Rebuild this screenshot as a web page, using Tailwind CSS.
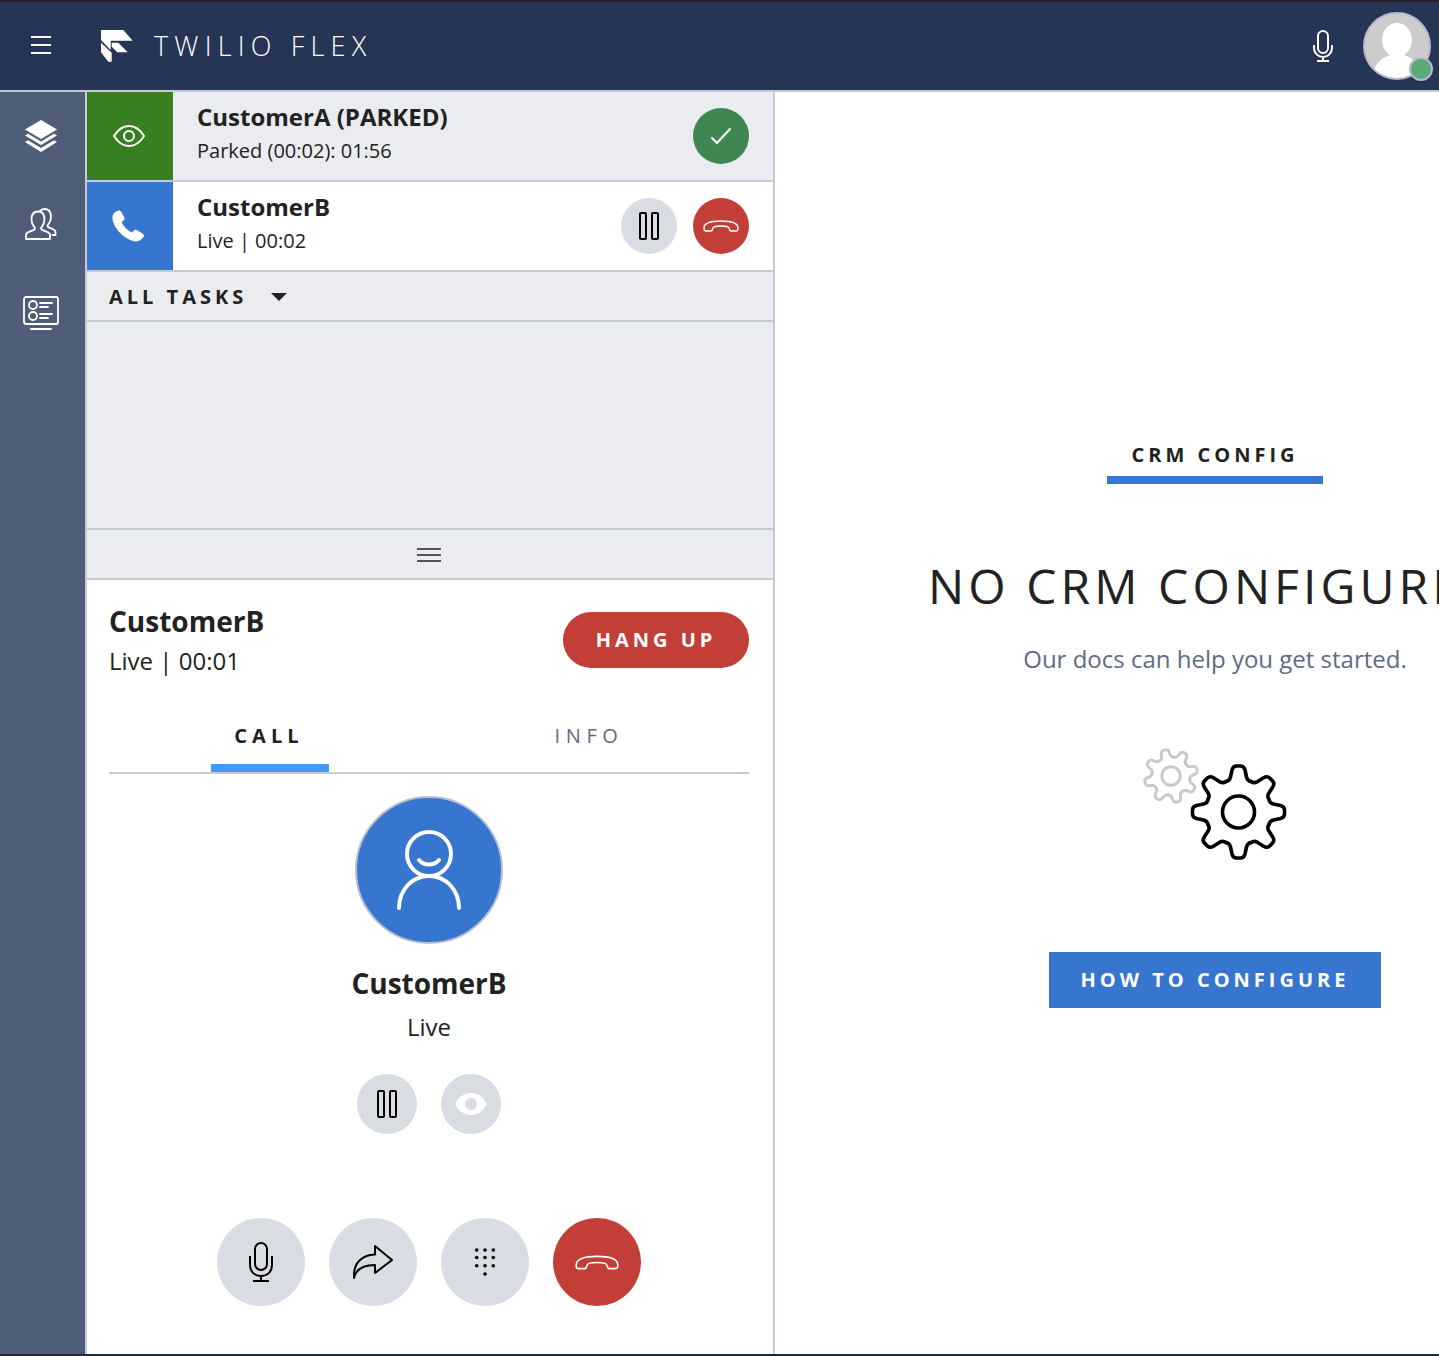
<!DOCTYPE html>
<html lang="en">
<head>
<meta charset="utf-8">
<title>Twilio Flex</title>
<script src="https://cdn.jsdelivr.net/npm/@tailwindcss/browser@4"></script>
</head>
<body class="m-0 bg-white">
<div class="flex h-[1356px] w-[1439px] flex-col overflow-hidden font-['Open_Sans',sans-serif] text-[#222222]">
  <div class="h-[2px] shrink-0 bg-[#222428]"></div>
  <header class="flex h-[88px] shrink-0 items-center bg-[#263556] text-white">
    <svg class="mb-[2px] ml-[31px]" width="20" height="18" viewBox="0 0 20 18"><path d="M0 1h20M0 9h20M0 17h20" stroke="#fff" stroke-width="2"/></svg>
    <svg class="ml-[50px]" width="32" height="32" viewBox="101 30 32 32" fill="#fff"><polygon points="101,30 123.3,30 132.7,40.7 110.7,40.7 110.7,50 101,40"/><polygon points="111.7,42.7 118.3,42.7 127.7,52.3 117.3,52.3 111.7,46.7"/><polygon points="101,42.7 111.7,52.7 111.7,61.7 108.3,61.7 101,52.3"/></svg>
    <span class="mb-[2px] ml-[21px] text-[27px] leading-none font-light tracking-[6.2px] whitespace-nowrap">TWILIO FLEX</span>
    <svg class="ml-auto" width="20" height="32" viewBox="0 0 20 32" fill="none" stroke="#fff" stroke-width="2"><rect x="5" y="1" width="10" height="22" rx="5"/><path d="M1 15v3a9 9 0 0 0 18 0v-3M10 27v4M4 31h12"/></svg>
    <div class="relative mr-[8px] ml-[30px] h-[68px] w-[68px] overflow-visible">
      <div class="h-full w-full overflow-hidden rounded-full border-2 border-[#b5b9c9] bg-[#cccccc]">
        <svg width="64" height="64" viewBox="0 0 64 64" fill="#fff"><ellipse cx="32" cy="26" rx="15" ry="17"/><path d="M8 60c2-12 12-20 24-20s22 8 24 20l-8 8H16z"/></svg>
      </div>
      <span class="absolute right-[-2px] bottom-[-1px] h-[24px] w-[24px] rounded-full border-2 border-[#b5b9c9] bg-[#5aa976]"></span>
    </div>
  </header>
  <div class="flex min-h-0 flex-1 border-t-2 border-[#c6cad7]">
    <nav class="flex w-[87px] shrink-0 flex-col items-center border-r-2 border-[#c6cad7] bg-[#4f5d78] pt-[28px] pr-[3px]">
      <svg class="block" width="32" height="32" viewBox="0 0 32 32" fill="#fff"><polygon points="16,0 32,9.5 16,19 0,9.5"/><path d="M0 15.5l3-1.800 13 7.800 13-7.800 3 1.800-16 9.500z"/><path d="M0 22l3-1.800 13 7.800 13-7.800 3 1.800-16 10z"/></svg>
      <svg class="mt-[56px] block" width="32" height="32" viewBox="0 0 32 32" fill="none" stroke="#fff" stroke-width="1.800" stroke-linejoin="round" stroke-linecap="round"><path d="M1 31v-4c0-1.500 1-2.500 3-3.200l5-2c1-.5 1.200-1.500.5-2.500C7.500 17 6.500 14.500 6.500 11.500 6.500 6.500 9 3.500 13 3.500s6.500 3 6.500 8c0 3-1 5.500-3 7.800-.7 1-.5 2 .5 2.500l5 2c2 .7 3 1.700 3 3.200v4z"/><path d="M15 3c1.500-1.500 3-2 4.500-2 4 0 6.500 3 6.500 8 0 3-1 5.500-3 7.800-.7 1-.5 2 .5 2.500l4 1.700c2 .8 3 1.700 3 3.200v2.800h-3"/></svg>
      <svg class="mt-[56px] block" width="36" height="34" viewBox="0 0 36 34" fill="none" stroke="#fff" stroke-width="1.800" stroke-linecap="round"><rect x="1" y="1" width="34" height="27" rx="2"/><circle cx="10" cy="9" r="4"/><circle cx="10" cy="20" r="4"/><path d="M17 7h12M17 11h8M17 18h12M17 22h8M8 33h20"/></svg>
    </nav>
    <main class="flex w-[688px] shrink-0 flex-col border-r-2 border-[#c6cad7]">
      <section class="flex h-[90px] shrink-0 border-b-2 border-[#c6cad7] bg-[#ebecf0]">
        <div class="flex w-[86px] shrink-0 items-center justify-center bg-[#387f22] pr-[2px]">
          <svg width="32" height="22" viewBox="0 0 32 22" fill="none" stroke="#fff" stroke-width="2"><path d="M1 11C5 4.500 10 1 16 1s11 3.500 15 10c-4 6.500-9 10-15 10S5 17.500 1 11z"/><circle cx="16" cy="11" r="5"/></svg>
        </div>
        <div class="ml-[24px] flex flex-col">
          <div class="mt-[9px] h-[32px] text-[24px] leading-[32px] font-bold whitespace-nowrap">CustomerA (PARKED)</div>
          <div class="mt-[3px] text-[20px] leading-[30px] whitespace-nowrap">Parked (00:02): 01:56</div>
        </div>
        <div class="mt-[16px] mr-[24px] ml-auto flex h-[56px] w-[56px] items-center justify-center rounded-full bg-[#3f8653]">
          <svg width="22" height="18" viewBox="0 0 22 18" fill="none" stroke="#fff" stroke-width="2" stroke-linecap="round"><path d="M2 11l5 5L20 2"/></svg>
        </div>
      </section>
      <section class="flex h-[90px] shrink-0 border-b-2 border-[#c6cad7] bg-white">
        <div class="flex w-[86px] shrink-0 items-center justify-center bg-[#3776ce] pr-[4px]">
          <svg width="32" height="32" viewBox="0 0 32 32" fill="#fff"><path d="M5 1C7 0 8.500 .5 9.500 2L12 7c1 1.500.5 3-1 4l-1.500 1c2 4.500 6 8.500 10.500 10.500l1.500-1.500c1-1.500 2.500-1.500 4-.5l5 3c1.500 1 2 2.500.5 4L28.500 30c-2.500 2-6.500 2-11.500-.5C9 25.500 3 18 1 11.500 0 7.500 .5 4.500 2.500 2.500z"/></svg>
        </div>
        <div class="ml-[24px] flex flex-col">
          <div class="mt-[9px] h-[32px] text-[24px] leading-[32px] font-bold whitespace-nowrap">CustomerB</div>
          <div class="mt-[3px] text-[20px] leading-[30px] whitespace-nowrap">Live | 00:02</div>
        </div>
        <div class="mt-[16px] mr-[24px] ml-auto flex gap-[16px]">
          <div class="flex h-[56px] w-[56px] items-center justify-center rounded-full bg-[#d9dce3]">
            <svg width="20" height="28" viewBox="0 0 20 28" fill="none" stroke="#000" stroke-width="2"><rect x="1" y="1" width="6" height="26" rx="1"/><rect x="13" y="1" width="6" height="26" rx="1"/></svg>
          </div>
          <div class="flex h-[56px] w-[56px] items-center justify-center rounded-full bg-[#c43e38]">
            <svg width="36" height="12" viewBox="0 0 36 12" fill="none" stroke="#fff" stroke-width="1.400"><path d="M1 8C1 3 8 1 18 1s17 2 17 7c0 2 0 3-2 3h-5c-1 0-1.500-1-2-3-.5-1.500-4-2-8-2s-7.500.5-8 2c-.5 2-1 3-2 3H3C1 11 1 10 1 8z"/></svg>
          </div>
        </div>
      </section>
      <section class="flex h-[50px] shrink-0 items-center border-b-2 border-[#c6cad7] bg-[#ebecf0] pt-[2px] pl-[22px]">
        <span class="text-[20px] leading-none font-bold tracking-[4px] whitespace-nowrap">ALL TASKS</span>
        <span class="ml-[24px] h-0 w-0 border-x-[8.500px] border-t-[8px] border-x-transparent border-t-[#222222]"></span>
      </section>
      <section class="h-[208px] shrink-0 border-b-2 border-[#c6cad7] bg-[#ebecf0]"></section>
      <section class="flex h-[50px] shrink-0 items-center justify-center border-b-2 border-[#c6cad7] bg-[#ebecf0] pt-[2px] pr-[2px]">
        <svg width="26" height="14" viewBox="0 0 26 14"><path d="M1 1h24M1 7h24M1 13h24" stroke="#222" stroke-width="1.600"/></svg>
      </section>
      <section class="flex min-h-0 flex-1 flex-col bg-white pr-[24px] pl-[22px]">
        <div class="flex items-start pt-[21px]">
          <div class="flex-1">
            <div class="h-[38px] text-[28px] leading-[40px] font-bold whitespace-nowrap">CustomerB</div>
            <div class="mt-[6px] text-[24px] leading-[32px] whitespace-nowrap">Live | 00:01</div>
          </div>
          <div class="mt-[11px] flex h-[56px] w-[186px] items-center justify-center rounded-[28px] bg-[#c43e38] text-[20px] leading-none font-bold tracking-[4px] text-white">HANG UP</div>
        </div>
        <div class="mt-[31px] flex h-[66px] border-b-2 border-[#c6cad7]">
          <div class="relative flex h-full w-[320px] justify-center pt-[13px] text-[20px] leading-[30px] font-bold tracking-[5.100px]">CALL<span class="absolute bottom-0 left-[102px] h-[8px] w-[118px] bg-[#4199f5]"></span></div>
          <div class="flex h-full w-[320px] justify-center pt-[13px] text-[20px] leading-[30px] tracking-[5.600px] text-[#606b85]">INFO</div>
        </div>
        <div class="mt-[22px] flex flex-col items-center">
          <div class="flex h-[148px] w-[148px] items-center justify-center rounded-full border-2 border-[#b8bfd0] bg-[#3776ce]">
            <svg width="144" height="144" viewBox="0 0 144 144" fill="none" stroke="#fff" stroke-width="4" stroke-linecap="round"><circle cx="72" cy="56" r="22"/><path d="M62 62c5 6 15 6 20 0M42 110c0-18 13-32 30-32s30 14 30 32"/></svg>
          </div>
          <div class="mt-[17px] h-[44px] text-[28px] leading-[44px] font-bold whitespace-nowrap">CustomerB</div>
          <div class="mt-[6px] h-[32px] text-[24px] leading-[32px] whitespace-nowrap">Live</div>
          <div class="mt-[31px] flex gap-[24px]">
            <div class="flex h-[60px] w-[60px] items-center justify-center rounded-full bg-[#d9dce3]">
              <svg width="20" height="28" viewBox="0 0 20 28" fill="none" stroke="#000" stroke-width="2"><rect x="1" y="1" width="6" height="26" rx="1"/><rect x="13" y="1" width="6" height="26" rx="1"/></svg>
            </div>
            <div class="flex h-[60px] w-[60px] items-center justify-center rounded-full bg-[#d9dce3]">
              <svg width="34" height="24" viewBox="0 0 34 24"><path fill="#fff" fill-rule="evenodd" d="M1 12C5 4.500 10.500 1 17 1s12 3.500 16 11c-4 7.500-9.500 11-16 11S5 19.500 1 12zm16 6a6 6 0 1 0 0-12 6 6 0 0 0 0 12z"/></svg>
            </div>
          </div>
          <div class="mt-[84px] flex gap-[24px]">
            <div class="flex h-[88px] w-[88px] items-center justify-center rounded-full bg-[#d9dce3]">
              <svg width="24" height="40" viewBox="0 0 24 40" fill="none" stroke="#000" stroke-width="2"><rect x="6" y="1" width="12" height="27" rx="6"/><path d="M1 14v9c0 7 5 11 11 11s11-4 11-11v-9M12 34v5M4 39h16"/></svg>
            </div>
            <div class="flex h-[88px] w-[88px] items-center justify-center rounded-full bg-[#d9dce3]">
              <svg width="40" height="34" viewBox="353 1244 40 34" fill="none" stroke="#000" stroke-width="2" stroke-linejoin="round"><path d="M354 1277C353 1262 362 1254 375 1253.500V1245L392 1259 375 1272V1264C364 1264 356 1268 354 1277z"/></svg>
            </div>
            <div class="flex h-[88px] w-[88px] items-center justify-center rounded-full bg-[#d9dce3]">
              <svg width="24" height="30" viewBox="0 0 24 30" fill="#000"><circle cx="3.700" cy="3" r="1.800"/><circle cx="12" cy="3" r="1.800"/><circle cx="20.300" cy="3" r="1.800"/><circle cx="3.700" cy="10.500" r="1.800"/><circle cx="12" cy="10.500" r="1.800"/><circle cx="20.300" cy="10.500" r="1.800"/><circle cx="3.700" cy="18.700" r="1.800"/><circle cx="12" cy="18.700" r="1.800"/><circle cx="20.300" cy="18.700" r="1.800"/><circle cx="12" cy="27" r="1.800"/></svg>
            </div>
            <div class="flex h-[88px] w-[88px] items-center justify-center rounded-full bg-[#c43e38]">
              <svg width="44" height="15" viewBox="0 0 36 12" fill="none" stroke="#fff" stroke-width="1.300"><path d="M1 8C1 3 8 1 18 1s17 2 17 7c0 2 0 3-2 3h-5c-1 0-1.500-1-2-3-.5-1.500-4-2-8-2s-7.500.5-8 2c-.5 2-1 3-2 3H3C1 11 1 10 1 8z"/></svg>
            </div>
          </div>
        </div>
      </section>
    </main>
    <aside class="min-w-0 flex-1 overflow-hidden bg-white">
      <div class="flex w-[880px] flex-col items-center pt-[350px]">
        <div class="flex h-[42px] w-[216px] justify-center border-b-[8px] border-[#3776ce] text-[20px] leading-[26px] font-bold tracking-[4px] whitespace-nowrap">CRM CONFIG</div>
        <div class="mt-[67px] text-[48px] leading-[70px] tracking-[4.100px] whitespace-nowrap">NO CRM CONFIGURED</div>
        <div class="mt-[22px] text-[24px] leading-[32px] text-[#606b85] whitespace-nowrap">Our docs can help you get started.</div>
        <svg class="mt-[72px] block" width="148" height="116" viewBox="1141 747 148 116" fill="none" stroke-linecap="round" stroke-linejoin="round">
          <defs>
            <path id="t" d="M-12.600-30.500Q-9-31-8-35L-6.500-42Q-5.500-46-2-46H2Q5.500-46 6.500-42L8-35Q9-31 12.600-30.500"/>
            <g id="gear">
              <use href="#t"/><use href="#t" transform="rotate(45)"/><use href="#t" transform="rotate(90)"/><use href="#t" transform="rotate(135)"/><use href="#t" transform="rotate(180)"/><use href="#t" transform="rotate(225)"/><use href="#t" transform="rotate(270)"/><use href="#t" transform="rotate(315)"/>
              <circle r="16"/>
            </g>
          </defs>
          <use href="#gear" transform="translate(1171 776) rotate(-14) scale(.58)" stroke="#c9c9c9" stroke-width="5"/>
          <use href="#gear" transform="translate(1238.500 812)" stroke="#000" stroke-width="3.600"/>
        </svg>
        <div class="mt-[89px] flex h-[56px] w-[332px] items-center justify-center bg-[#3776ce] text-[20px] leading-none font-bold tracking-[4px] whitespace-nowrap text-white">HOW TO CONFIGURE</div>
      </div>
    </aside>
  </div>
  <div class="h-[2px] shrink-0 bg-[#222a38]"></div>
</div>
</body>
</html>
